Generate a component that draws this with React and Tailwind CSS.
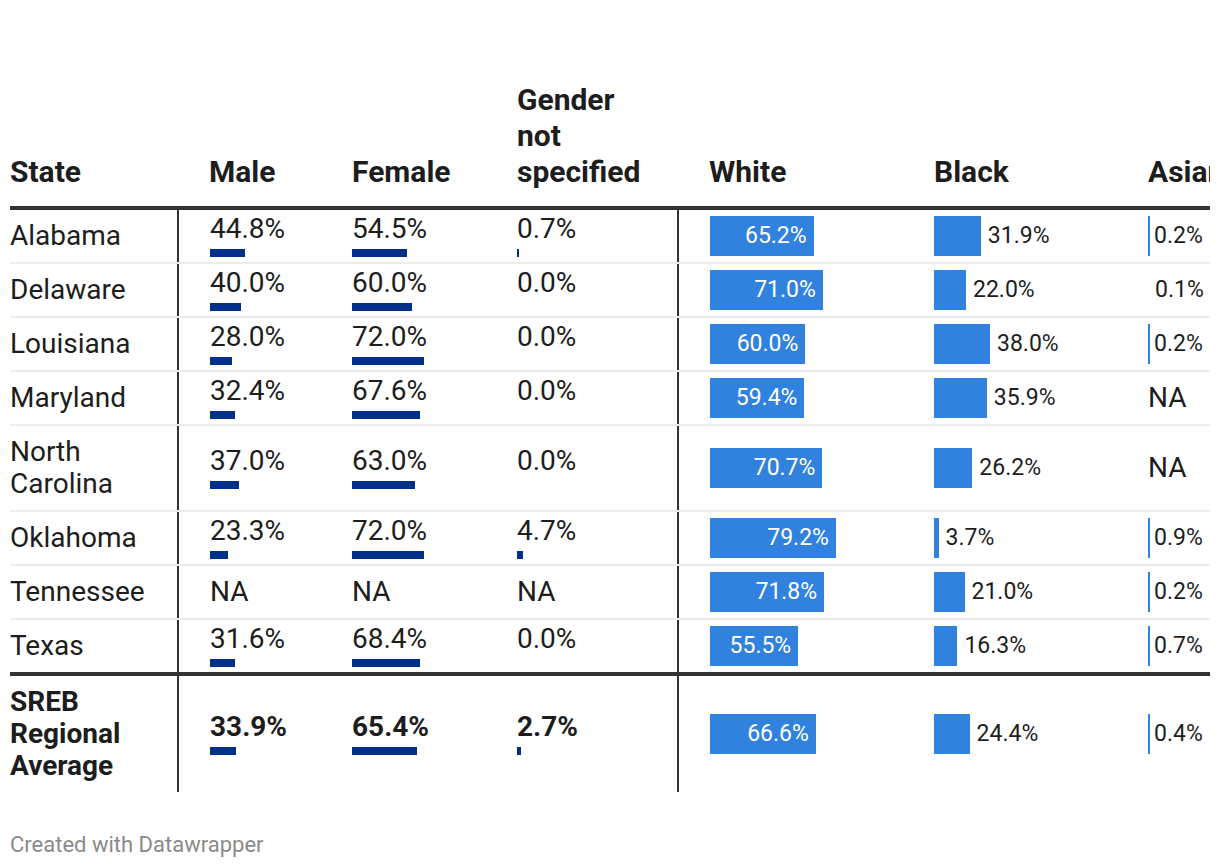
import React from "react";

const rows = [
  { state: "Alabama", male: 44.8, female: 54.5, gns: 0.7, white: 65.2, black: 31.9, asian: 0.2 },
  { state: "Delaware", male: 40.0, female: 60.0, gns: 0.0, white: 71.0, black: 22.0, asian: 0.1 },
  { state: "Louisiana", male: 28.0, female: 72.0, gns: 0.0, white: 60.0, black: 38.0, asian: 0.2 },
  { state: "Maryland", male: 32.4, female: 67.6, gns: 0.0, white: 59.4, black: 35.9, asian: null },
  { state: "North Carolina", male: 37.0, female: 63.0, gns: 0.0, white: 70.7, black: 26.2, asian: null },
  { state: "Oklahoma", male: 23.3, female: 72.0, gns: 4.7, white: 79.2, black: 3.7, asian: 0.9 },
  { state: "Tennessee", male: null, female: null, gns: null, white: 71.8, black: 21.0, asian: 0.2 },
  { state: "Texas", male: 31.6, female: 68.4, gns: 0.0, white: 55.5, black: 16.3, asian: 0.7 },
];

const average = {
  state: "SREB Regional Average",
  male: 33.9,
  female: 65.4,
  gns: 2.7,
  white: 66.6,
  black: 24.4,
  asian: 0.4,
};

const fmt = (v) => v.toFixed(1) + "%";

// small navy bar under the number
function GenderCell({ value, scale, min = 0, bold }) {
  if (value === null) return <span>NA</span>;
  let w = value * scale;
  if (value > 0 && w < min) w = min;
  return (
    <div className="flex flex-col">
      <span className={`leading-[28px] ${bold ? "font-bold" : ""}`}>{fmt(value)}</span>
      <div className="mt-[6px] h-2">
        <div className="h-2 bg-[#00308a]" style={{ width: w }} />
      </div>
    </div>
  );
}

function WhiteCell({ value }) {
  return (
    <div
      className="flex h-10 items-center justify-end bg-[#3182df] pr-[7px] text-[23px] text-white"
      style={{ width: value * 1.59 }}
    >
      {fmt(value)}
    </div>
  );
}

function BlackCell({ value }) {
  return (
    <div className="flex items-center gap-[7px]">
      <div className="h-10 bg-[#3182df]" style={{ width: Math.max(value * 1.5 - 1, 3) }} />
      <span className="text-[23px]">{fmt(value)}</span>
    </div>
  );
}

function AsianCell({ value }) {
  if (value === null) return <span>NA</span>;
  return (
    <div className="flex items-center">
      {value >= 0.2 ? <div className="h-10 w-[2px] bg-[#3182df]" /> : <div className="h-10 w-[3px]" />}
      <span className="ml-[4px] text-[23px]">{fmt(value)}</span>
    </div>
  );
}

function Row({ r, last, bold }) {
  return (
    <div className={`flex ${last ? "" : "border-b-2 border-[#ececec]"}`}>
      <div
        className={`flex w-[167px] shrink-0 items-center py-[10px] leading-[32px] ${bold ? "font-bold" : ""}`}
      >
        <span className="pr-4">{r.state}</span>
      </div>
      <div className="w-[2px] shrink-0 bg-[#333333]" />
      <div className="flex w-[173px] shrink-0 items-center pl-[31px]">
        <GenderCell value={r.male} scale={0.78} bold={bold} />
      </div>
      <div className="flex w-[165px] shrink-0 items-center">
        <GenderCell value={r.female} scale={1} bold={bold} />
      </div>
      <div className="flex w-[160px] shrink-0 items-center">
        <GenderCell value={r.gns} scale={1.3} min={2} bold={bold} />
      </div>
      <div className="w-[2px] shrink-0 bg-[#333333]" />
      <div className="flex w-[255px] shrink-0 items-center pl-[31px]">
        <WhiteCell value={r.white} />
      </div>
      <div className="flex w-[214px] shrink-0 items-center">
        <BlackCell value={r.black} />
      </div>
      <div className="flex w-[120px] shrink-0 items-center">
        <AsianCell value={r.asian} />
      </div>
    </div>
  );
}

export default function App() {
  return (
    <div
      className="min-h-screen bg-white pt-[82px] text-[28px] text-[#1d1d1d]"
      style={{ fontFamily: "Roboto, 'Noto Sans', sans-serif" }}
    >
      <div className="w-[1210px] overflow-hidden pl-[10px]">
        <div className="w-[1260px]">
          {/* header */}
          <div className="flex items-end border-b-4 border-[#333333] pb-[16px] text-[30px] font-bold leading-[36px]">
            <div className="w-[169px] shrink-0">State</div>
            <div className="w-[173px] shrink-0 pl-[30px]">Male</div>
            <div className="w-[165px] shrink-0">Female</div>
            <div className="w-[162px] shrink-0">
              Gender
              <br />
              not
              <br />
              specified
            </div>
            <div className="w-[255px] shrink-0 pl-[30px]">White</div>
            <div className="w-[214px] shrink-0">Black</div>
            <div className="w-[120px] shrink-0">Asian</div>
          </div>

          {rows.map((r, i) => (
            <Row key={r.state} r={r} last={i === rows.length - 1} />
          ))}

          <div className="border-t-4 border-[#333333]">
            <Row r={average} last bold />
          </div>
        </div>
      </div>

      <div className="mt-[40px] pl-[10px] text-[22px] leading-[26px] text-[#8a8a8a]">
        Created with Datawrapper
      </div>
    </div>
  );
}
